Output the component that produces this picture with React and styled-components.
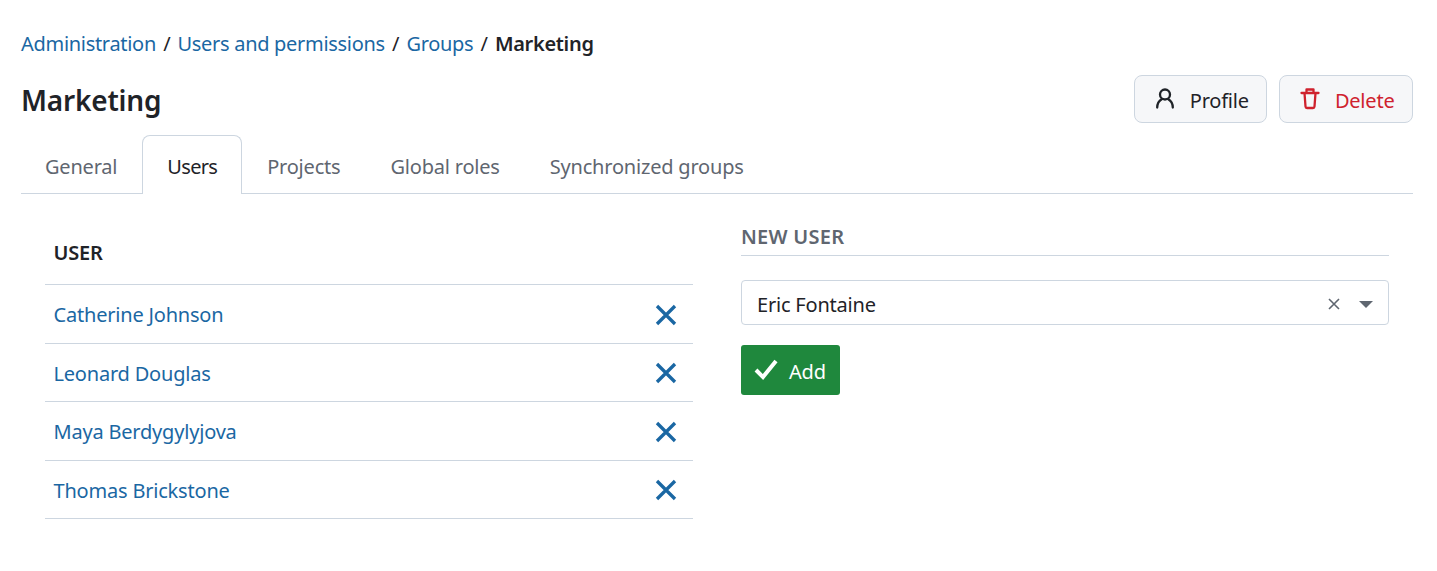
import styled, { createGlobalStyle } from "styled-components";

const GlobalStyle = createGlobalStyle`
  html, body {
    margin: 0;
    padding: 0;
    background: #fff;
    font-family: "Noto Sans", "Open Sans", sans-serif;
    font-size: 20px;
    color: #1f2328;
    letter-spacing: -0.2px;
  }
`;

const blue = "#1a67a3";
const line = "#cdd6e0";

const Page = styled.div`
  padding: 28px 24px 0 21px;
`;

const Breadcrumb = styled.nav`
  display: flex;
  align-items: center;
  height: 32px;
  box-sizing: border-box;
  padding-bottom: 2px;
  gap: 7.2px;
  letter-spacing: -0.3px;
  a {
    color: ${blue};
    text-decoration: none;
  }
  strong {
    font-weight: 600;
  }
`;

const Header = styled.div`
  display: flex;
  justify-content: space-between;
  align-items: center;
  margin-top: 15px;
  height: 48px;
`;

const Title = styled.h1`
  margin: 0;
  padding-top: 1px;
  font-size: 28px;
  font-weight: 600;
`;

const Actions = styled.div`
  display: flex;
  gap: 12px;
`;

const ActionButton = styled.button`
  display: flex;
  align-items: center;
  gap: 13px;
  height: 48px;
  padding: 0 17.5px;
  box-sizing: border-box;
  border: 1px solid ${line};
  border-radius: 8px;
  background: #f6f7f9;
  font: inherit;
  letter-spacing: inherit;
  color: ${(p) => (p.$danger ? "#cf222e" : "#1f2328")};
  span {
    padding-top: 2px;
  }
`;

const Tabs = styled.div`
  display: flex;
  margin-top: 12px;
  height: 59px;
  box-sizing: border-box;
  border-bottom: 1px solid ${line};
`;

const Tab = styled.div`
  display: flex;
  align-items: center;
  height: 59px;
  box-sizing: border-box;
  padding: 3px 24px 0;
  letter-spacing: ${(p) => (p.$active ? "-0.7px" : "-0.2px")};
  color: ${(p) => (p.$active ? "#1f2328" : "#5f6670")};
  background: ${(p) => (p.$active ? "#fff" : "transparent")};
  border: 1px solid ${(p) => (p.$active ? line : "transparent")};
  border-bottom: 0;
  border-radius: 8px 8px 0 0;
  &:first-child {
    margin-left: -1px;
  }
`;

const Columns = styled.div`
  display: flex;
  padding: 0 0 0 24px;
`;

const UserTable = styled.div`
  width: 648px;
  padding-top: 32px;
`;

const TableHead = styled.div`
  font-weight: 600;
  padding: 13px 8.5px 0;
  height: 59px;
  box-sizing: border-box;
  border-bottom: 1px solid ${line};
`;

const UserRow = styled.div`
  display: flex;
  justify-content: space-between;
  align-items: center;
  height: 58.5px;
  box-sizing: border-box;
  padding: 2px 15px 0 8.5px;
  border-bottom: 1px solid ${line};
  a {
    color: ${blue};
    text-decoration: none;
  }
`;

const NewUser = styled.div`
  width: 648px;
  margin-left: 48px;
  padding-top: 28px;
`;

const SectionTitle = styled.div`
  color: #5f6670;
  font-weight: 600;
  letter-spacing: 0.25px;
  height: 32px;
  padding-top: 1px;
  border-bottom: 1px solid ${line};
`;

const SelectBox = styled.div`
  display: flex;
  align-items: center;
  margin-top: 24px;
  height: 45px;
  box-sizing: border-box;
  padding: 3px 15px 0 15px;
  border: 1px solid ${line};
  border-radius: 4px;
  span {
    flex: 1;
  }
`;

const Caret = styled.i`
  margin-left: 18px;
  width: 0;
  height: 0;
  border-left: 7px solid transparent;
  border-right: 7px solid transparent;
  border-top: 7px solid #5f6670;
`;

const AddButton = styled.button`
  display: flex;
  align-items: center;
  gap: 11px;
  margin-top: 20px;
  height: 50px;
  padding: 0 14px 0 13px;
  border: 0;
  border-radius: 3px;
  background: #1f883d;
  color: #fff;
  font: inherit;
  letter-spacing: inherit;
  span {
    padding-top: 2px;
  }
`;

const PersonIcon = () => (
  <svg width="24" height="24" viewBox="0 0 24 24" fill="none" stroke="#1f2328" strokeWidth="2.3" strokeLinecap="round">
    <circle cx="12" cy="7.5" r="5" />
    <path d="M4.2 20.5c0-4 2-7 4.8-8.6M19.8 20.5c0-4-2-7-4.8-8.6" />
  </svg>
);

const TrashIcon = () => (
  <svg width="24" height="24" viewBox="0 0 24 24" fill="none" stroke="#cf222e" strokeWidth="2.3" strokeLinecap="round" strokeLinejoin="round">
    <path d="M3.5 6h17M8.5 6V2.5h7V6M6.5 6l1 13.5q.1 1.5 1.5 1.5h6q1.400 0 1.500-1.500l1-13.500" />
  </svg>
);

const CrossIcon = () => (
  <svg width="24" height="24" viewBox="0 0 24 24" fill="none" stroke={blue} strokeWidth="3.3">
    <path d="M3 3l18 18M21 3L3 21" />
  </svg>
);

const SmallCross = () => (
  <svg width="14" height="14" viewBox="0 0 14 14" fill="none" stroke="#5f6670" strokeWidth="1.6">
    <path d="M2 2l10 10M12 2L2 12" />
  </svg>
);

const CheckIcon = () => (
  <svg width="24" height="24" viewBox="0 0 24 24" fill="none" stroke="#fff" strokeWidth="4">
    <path d="M2 12l7 7L22 3" />
  </svg>
);

const users = ["Catherine Johnson", "Leonard Douglas", "Maya Berdygylyjova", "Thomas Brickstone"];

const App = () => (
  <Page>
    <GlobalStyle />
    <Breadcrumb>
      <a href="#a">Administration</a>/<a href="#u">Users and permissions</a>/<a href="#g">Groups</a>/<strong>Marketing</strong>
    </Breadcrumb>
    <Header>
      <Title>Marketing</Title>
      <Actions>
        <ActionButton><PersonIcon /><span>Profile</span></ActionButton>
        <ActionButton $danger><TrashIcon /><span>Delete</span></ActionButton>
      </Actions>
    </Header>
    <Tabs>
      <Tab>General</Tab>
      <Tab $active>Users</Tab>
      <Tab>Projects</Tab>
      <Tab>Global roles</Tab>
      <Tab>Synchronized groups</Tab>
    </Tabs>
    <Columns>
      <UserTable>
        <TableHead>USER</TableHead>
        {users.map((name) => (
          <UserRow key={name}>
            <a href="#user">{name}</a>
            <CrossIcon />
          </UserRow>
        ))}
      </UserTable>
      <NewUser>
        <SectionTitle>NEW USER</SectionTitle>
        <SelectBox>
          <span>Eric Fontaine</span>
          <SmallCross />
          <Caret />
        </SelectBox>
        <AddButton><CheckIcon /><span>Add</span></AddButton>
      </NewUser>
    </Columns>
  </Page>
);

export default App;
